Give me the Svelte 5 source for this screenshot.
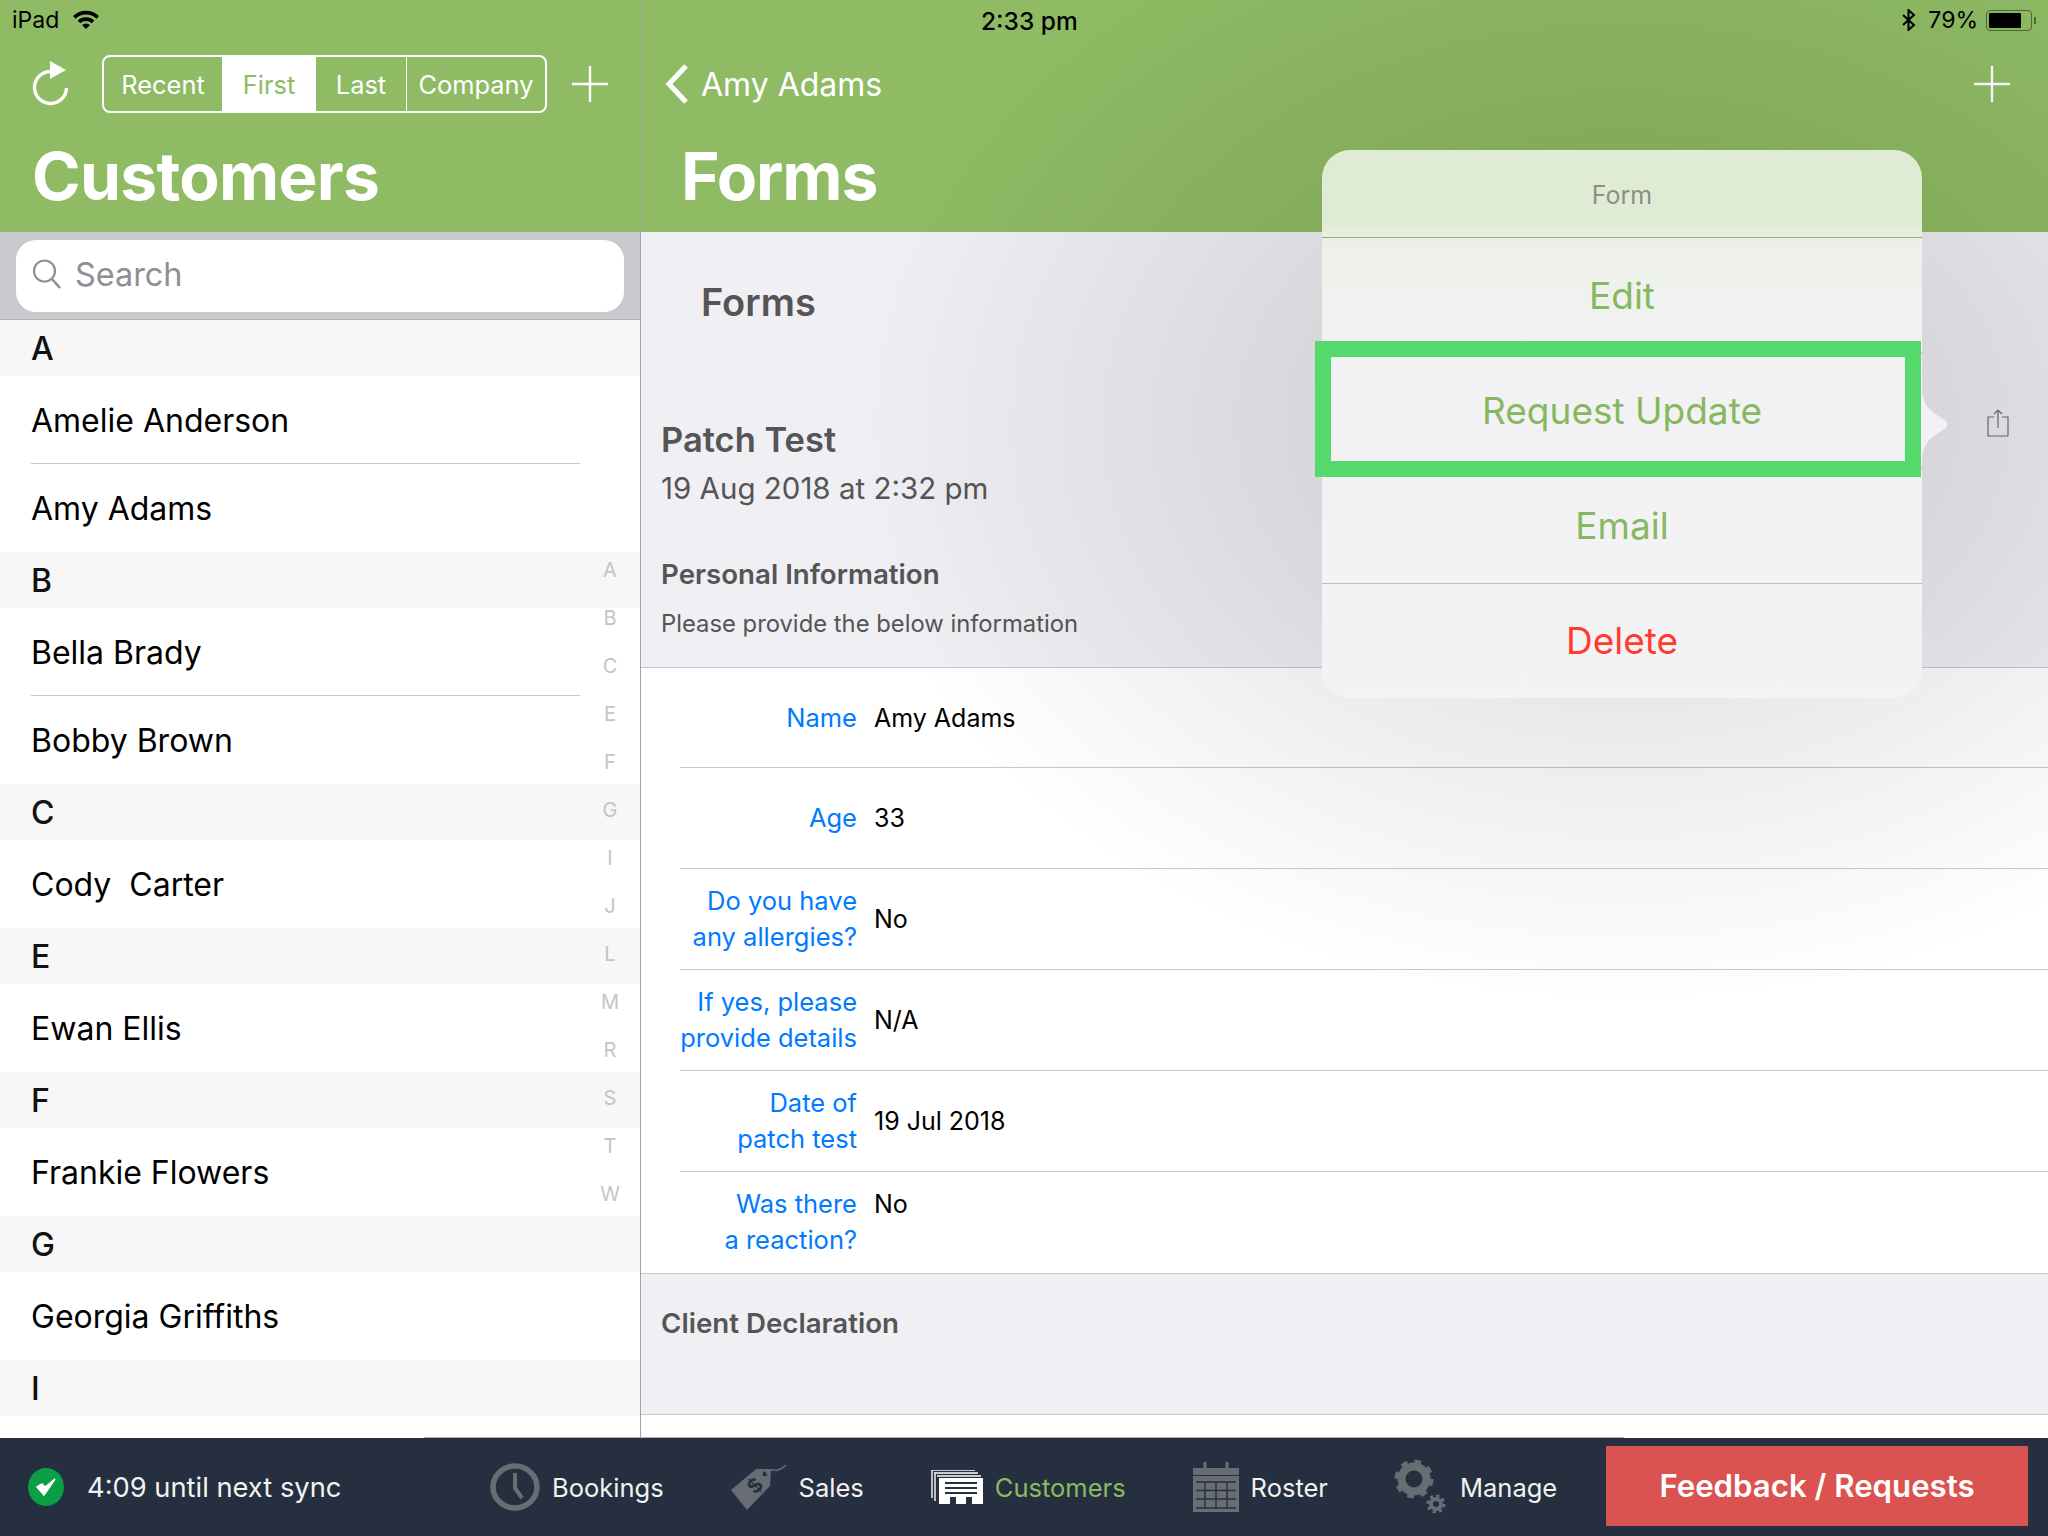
<script lang="ts">
    const sections = [
        { letter: 'A', people: ['Amelie Anderson', 'Amy Adams'] },
        { letter: 'B', people: ['Bella Brady', 'Bobby Brown'] },
        { letter: 'C', people: ['Cody  Carter'] },
        { letter: 'E', people: ['Ewan Ellis'] },
        { letter: 'F', people: ['Frankie Flowers'] },
        { letter: 'G', people: ['Georgia Griffiths'] },
        { letter: 'I', people: [''] }
    ];
    const indexLetters = ['A', 'B', 'C', 'E', 'F', 'G', 'I', 'J', 'L', 'M', 'R', 'S', 'T', 'W'];
    const segments = ['Recent', 'First', 'Last', 'Company'];
    const fields = [
        { label: ['Name'], value: 'Amy Adams' },
        { label: ['Age'], value: '33' },
        { label: ['Do you have', 'any allergies?'], value: 'No' },
        { label: ['If yes, please', 'provide details'], value: 'N/A' },
        { label: ['Date of', 'patch test'], value: '19 Jul 2018' },
        { label: ['Was there', 'a reaction?'], value: 'No', top: true }
    ];
</script>

<div class="screen">
    <div class="panes">
        <aside class="left">
            <header class="head">
                <div class="status">
                    <span>iPad</span>
                    <svg class="wifi" viewBox="0 0 28 20" width="28" height="20">
                        <path d="M1 7 A19 19 0 0 1 27 7 L24.4 9.8 A15 15 0 0 0 3.6 9.8 Z" fill="#000" />
                        <path d="M5.6 11.6 A12.4 12.4 0 0 1 22.4 11.6 L19.8 14.3 A8.6 8.6 0 0 0 8.2 14.3 Z" fill="#000" />
                        <path d="M10 16 A6 6 0 0 1 18 16 L14 20 Z" fill="#000" />
                    </svg>
                </div>
                <div class="tools">
                    <svg class="refresh" viewBox="0 0 38 46" width="38" height="46">
                        <path d="M18 10.5 A16 16 0 1 0 34.5 27" fill="none" stroke="#fff" stroke-width="3.4" />
                        <path d="M18 0 L34 9 L18 18 Z" fill="#fff" />
                    </svg>
                    <div class="segmented">
                        {#each segments as seg}
                            <div class="seg" class:active={seg === 'First'}>{seg}</div>
                        {/each}
                    </div>
                    <svg class="plus" viewBox="0 0 36 36" width="36" height="36">
                        <path d="M18 0 V36 M0 18 H36" stroke="#fff" stroke-width="2.4" />
                    </svg>
                </div>
                <h1>Customers</h1>
            </header>
            <div class="searchbar">
                <div class="searchbox">
                    <svg viewBox="0 0 30 32" width="30" height="32">
                        <circle cx="12.5" cy="13" r="10.5" fill="none" stroke="#8e8e93" stroke-width="2.2" />
                        <path d="M20 21 L28 30" stroke="#8e8e93" stroke-width="2.6" />
                    </svg>
                    <span>Search</span>
                </div>
            </div>
            <div class="list">
                {#each sections as section}
                    <div class="letter">{section.letter}</div>
                    {#each section.people as person, i}
                        <div class="person" class:ruled={i < section.people.length - 1}>{person}</div>
                    {/each}
                {/each}
                <div class="index">
                    {#each indexLetters as l}
                        <span>{l}</span>
                    {/each}
                </div>
            </div>
        </aside>

        <main class="right">
            <header class="head">
                <div class="status right-status">
                    <span class="time">2:33 pm</span>
                    <div class="status-end">
                        <svg viewBox="0 0 14 22" width="14" height="22">
                            <path d="M1 6 L12 16 L6.5 21 V1 L12 6 L1 16" fill="none" stroke="#000" stroke-width="2" />
                        </svg>
                        <span>79%</span>
                        <div class="battery"><div class="charge"></div></div>
                        <div class="battery-tip"></div>
                    </div>
                </div>
                <div class="tools nav">
                    <svg viewBox="0 0 24 40" width="24" height="40">
                        <path d="M21 2 L4 20 L21 38" fill="none" stroke="#fff" stroke-width="5" />
                    </svg>
                    <span class="back">Amy Adams</span>
                    <svg class="plus" viewBox="0 0 36 36" width="36" height="36">
                        <path d="M18 0 V36 M0 18 H36" stroke="#fff" stroke-width="2.4" />
                    </svg>
                </div>
                <h1>Forms</h1>
            </header>

            <div class="intro">
                <h2>Forms</h2>
                <div class="intro-row">
                    <div>
                        <h3>Patch Test</h3>
                        <p class="date">19 Aug 2018 at 2:32 pm</p>
                    </div>
                    <svg class="share" viewBox="0 0 22 28" width="22" height="28">
                        <path d="M7 8 H1 V27 H21 V8 H15" fill="none" stroke="#6d6d72" stroke-width="1.2" />
                        <path d="M11 19 V1 M7 5 L11 1 L15 5" fill="none" stroke="#6d6d72" stroke-width="1.2" />
                    </svg>
                </div>
                <h4>Personal Information</h4>
                <p class="hint">Please provide the below information</p>
            </div>

            <div class="fields">
                {#each fields as field}
                    <div class="field" class:top={field.top}>
                        <div class="label">
                            {#each field.label as line}
                                <div>{line}</div>
                            {/each}
                        </div>
                        <div class="value">{field.value}</div>
                    </div>
                {/each}
            </div>

            <div class="declaration">
                <h4>Client Declaration</h4>
            </div>
            <div class="blank"></div>
        </main>
    </div>

    <footer class="bar">
        <div class="sync">
            <svg viewBox="0 0 36 38" width="36" height="38">
                <ellipse cx="18" cy="19" rx="18" ry="19" fill="#0a9f45" />
                <path d="M9 19 L16 27 L27 11 L17 19 L14 16 Z" fill="#fff" stroke="#fff" stroke-width="1.5" />
            </svg>
            <span>4:09 until next sync</span>
        </div>
        <div class="tab bookings">
            <svg viewBox="0 0 50 48" width="50" height="48">
                <ellipse cx="25" cy="24" rx="22" ry="21" fill="none" stroke="#686d74" stroke-width="5.5" />
                <path d="M25 10 V25 L32 35" fill="none" stroke="#686d74" stroke-width="4" />
            </svg>
            <span>Bookings</span>
        </div>
        <div class="tab sales">
            <svg viewBox="0 0 58 46" width="58" height="46">
                <path d="M1 26 L26 5 L41 5 L40 22 L17 46 Z" fill="#686d74" />
                <circle cx="35" cy="10" r="2.4" fill="#252f3f" />
                <path d="M36 10 C40 2 44 8 48 6 C52 5 54 3 56 1" fill="none" stroke="#686d74" stroke-width="1.6" />
                <text x="21" y="33" font-size="20" font-weight="700" fill="#252f3f" transform="rotate(-45 21 27)">$</text>
            </svg>
            <span>Sales</span>
        </div>
        <div class="tab customers">
            <svg viewBox="0 0 52 34" width="52" height="34">
                <path d="M0 0 H44 M1 1 V28 M3 3 H47 M4 3 V31 M6 6 H50" fill="none" stroke="#fff" stroke-width="1.4" />
                <path d="M8 8 H52 V34 H41 V27 H35 V34 H25 V27 H19 V34 H8 Z" fill="#fff" />
                <path d="M14 13 H46 M14 18 H46 M14 23 H46" stroke="#252f3f" stroke-width="2" />
            </svg>
            <span>Customers</span>
        </div>
        <div class="tab roster">
            <svg viewBox="0 0 46 50" width="46" height="50">
                <path d="M12 0 V10 M34 0 V10" stroke="#686d74" stroke-width="3" />
                <path d="M0 6 H46 V50 H0 Z" fill="#686d74" />
                <path d="M0 13.5 H46" stroke="#252f3f" stroke-width="1" />
                <path d="M12 20 V46 M23 20 V46 M34 20 V46 M3 20 H43 M3 28.5 H43 M3 37 H43 M3 46 H43" stroke="#252f3f" stroke-width="1.4" />
            </svg>
            <span>Roster</span>
        </div>
        <div class="tab manage">
            <svg viewBox="0 0 54 56" width="54" height="56">
                <circle cx="20" cy="20" r="12.5" fill="none" stroke="#686d74" stroke-width="8" />
                <circle cx="20" cy="20" r="17" fill="none" stroke="#686d74" stroke-width="5" stroke-dasharray="6.5 6.85" />
                <circle cx="42" cy="45" r="5" fill="none" stroke="#686d74" stroke-width="4" />
                <circle cx="42" cy="45" r="8" fill="none" stroke="#686d74" stroke-width="3" stroke-dasharray="3.2 3.08" />
            </svg>
            <span>Manage</span>
        </div>
        <div class="feedback">Feedback / Requests</div>
    </footer>

    <div class="dim"></div>

    <div class="popover">
        <div class="pop-title">Form</div>
        <div class="pop-item">Edit</div>
        <div class="pop-item">Request Update</div>
        <div class="pop-item">Email</div>
        <div class="pop-item danger">Delete</div>
        <div class="arrow"></div>
        <div class="highlight"></div>
    </div>
</div>

<style>
    :global(body) {
        margin: 0;
        font-family: Inter, "Noto Sans", sans-serif;
    }
    .screen {
        position: relative;
        width: 2048px;
        height: 1536px;
        overflow: hidden;
        display: flex;
        flex-direction: column;
        background: #fff;
    }
    .panes {
        height: 1438px;
        display: flex;
    }
    .left {
        width: 640px;
        border-right: 1px solid #a3a3a8;
        display: flex;
        flex-direction: column;
        flex-shrink: 0;
    }
    .right {
        flex: 1;
        display: flex;
        flex-direction: column;
        background: #efeff4;
    }
    .head {
        height: 232px;
        flex-shrink: 0;
        background: #8fbb64;
        box-sizing: border-box;
        position: relative;
    }
    .status {
        height: 40px;
        padding-left: 12px;
        display: flex;
        align-items: center;
        gap: 13px;
        font-size: 23px;
        color: #000;
    }
    .wifi {
        margin-top: -2px;
    }
    .right-status {
        padding: 0 12px 0 0;
        position: relative;
        justify-content: flex-end;
    }
    .time {
        position: absolute;
        left: 340px;
        top: 6px;
        font-size: 24.5px;
        font-weight: 500;
    }
    .status-end {
        display: flex;
        align-items: center;
        gap: 0;
    }
    .status-end span {
        margin: 0 8px 0 12px;
    }
    .battery {
        width: 46px;
        height: 21px;
        box-sizing: border-box;
        border: 1.5px solid #4d6a38;
        border-radius: 4px;
        padding: 2px;
    }
    .charge {
        width: 79%;
        height: 100%;
        background: #000;
        border-radius: 1px;
    }
    .battery-tip {
        width: 2px;
        height: 7px;
        margin-left: 2px;
        background: #4d6a38;
    }
    .tools {
        height: 72px;
        padding: 16px 32px 0 32px;
        display: flex;
        align-items: center;
        box-sizing: border-box;
    }
    .refresh {
        flex-shrink: 0;
        margin-top: -1px;
    }
    .segmented {
        margin-left: 32px;
        width: 447px;
        height: 58px;
        box-sizing: border-box;
        border: 2px solid #fff;
        border-radius: 8px;
        display: grid;
        grid-template-columns: 118px 94px 91px 1fr;
        overflow: hidden;
    }
    .seg {
        display: flex;
        align-items: center;
        justify-content: center;
        color: #fff;
        font-size: 25.4px;
    }
    .seg:nth-child(3) {
        border-right: 1.5px solid #fff;
    }
    .seg.active {
        background: #fff;
        color: #8fbb64;
    }
    .tools .plus {
        margin-left: 25px;
        flex-shrink: 0;
    }
    h1 {
        margin: 24px 0 0 32px;
        font-size: 66px;
        line-height: 80px;
        font-weight: 700;
        color: #fff;
        letter-spacing: -0.8px;
    }
    .nav {
        padding: 16px 38px 0 24px;
    }
    .back {
        margin-left: 12px;
        flex: 1;
        color: #fff;
        font-size: 32px;
    }
    .right .head h1 {
        margin-left: 40px;
        letter-spacing: -1.1px;
    }
    .searchbar {
        height: 88px;
        box-sizing: border-box;
        flex-shrink: 0;
        background: #c9c9ce;
        border-bottom: 1px solid #b2b2b7;
        padding: 8px 16px 7px;
    }
    .searchbox {
        height: 72px;
        box-sizing: border-box;
        background: #fff;
        border-radius: 20px;
        display: flex;
        align-items: center;
        padding: 0 0 4px 16px;
        gap: 13px;
        color: #8e8e93;
        font-size: 32.4px;
    }
    .list {
        position: relative;
        flex: 1;
        overflow: hidden;
    }
    .letter {
        height: 56px;
        padding: 1px 0 0 31px;
        box-sizing: border-box;
        background: #f7f7f7;
        display: flex;
        align-items: center;
        font-size: 32px;
        font-weight: 500;
        color: #111;
    }
    .person {
        height: 88px;
        padding-left: 31px;
        display: flex;
        align-items: center;
        font-size: 32px;
        color: #000;
        white-space: pre;
        position: relative;
    }
    .person.ruled::after {
        content: '';
        position: absolute;
        left: 31px;
        right: 60px;
        bottom: 0;
        height: 1px;
        background: #c8c7cc;
    }
    .index {
        position: absolute;
        top: 226px;
        right: 18px;
        width: 24px;
        display: flex;
        flex-direction: column;
        align-items: center;
        font-size: 20px;
        line-height: 48px;
        color: #c4c4c6;
    }
    .intro {
        height: 436px;
        flex-shrink: 0;
        box-sizing: border-box;
        border-bottom: 1px solid #c8c7cc;
        padding: 0 20px;
        color: #555;
    }
    h2 {
        margin: 44px 0 0 40px;
        font-size: 38px;
        line-height: 52px;
        font-weight: 600;
    }
    .intro-row {
        display: flex;
        justify-content: space-between;
        align-items: flex-start;
        margin-top: 90px;
    }
    h3 {
        margin: 0;
        font-size: 34.5px;
        line-height: 44px;
        font-weight: 600;
    }
    .date {
        margin: 4px 0 0;
        font-size: 29.5px;
        line-height: 44px;
    }
    .share {
        margin: -9px 19px 0 0;
    }
    h4 {
        margin: 44px 0 0;
        font-size: 27.7px;
        line-height: 40px;
        font-weight: 600;
        color: #555;
    }
    .hint {
        margin: 12px 0 0;
        font-size: 23.8px;
        line-height: 36px;
    }
    .fields {
        background: #fff;
        flex-shrink: 0;
        padding-left: 39px;
        border-bottom: 1px solid #c8c7cc;
    }
    .field {
        height: 101px;
        box-sizing: border-box;
        border-bottom: 1px solid #c8c7cc;
        display: flex;
        align-items: center;
        line-height: 36px;
    }
    .field:first-child {
        height: 100px;
    }
    .field:last-child {
        border-bottom: 0;
    }
    .label {
        width: 179px;
        margin-left: -2px;
        flex-shrink: 0;
        text-align: right;
        color: #007aff;
        font-size: 25.5px;
        white-space: nowrap;
    }
    .value {
        margin-left: 17px;
        color: #000;
        font-size: 25px;
    }
    .field.top {
        align-items: flex-start;
        padding-top: 14px;
    }
    .declaration {
        height: 141px;
        flex-shrink: 0;
        box-sizing: border-box;
        padding: 29px 20px 0;
        border-bottom: 1px solid #c8c7cc;
    }
    .declaration h4 {
        margin: 0;
    }
    .blank {
        flex: 1;
        background: #fff;
    }
    .bar {
        flex: 1;
        background: #252f3f;
        position: relative;
        display: flex;
        align-items: center;
        font-size: 25.5px;
        color: #f2f2f2;
    }
    .bar::before {
        content: '';
        position: absolute;
        top: -1px;
        left: 424px;
        width: 1200px;
        height: 1px;
        background: #b2b2b2;
    }
    .sync {
        width: 490px;
        flex-shrink: 0;
        box-sizing: border-box;
        padding-left: 28px;
        display: flex;
        align-items: center;
        gap: 23px;
        font-size: 27.3px;
    }
    .tab {
        display: flex;
        align-items: center;
        gap: 12px;
        flex-shrink: 0;
    }
    .sales {
        margin-left: 66px;
        gap: 11px;
    }
    .customers {
        margin-left: 67px;
        color: #8cba5f;
    }
    .roster {
        margin-left: 67px;
    }
    .manage {
        margin-left: 66px;
    }
    .feedback {
        margin: 0 20px 2px auto;
        width: 422px;
        height: 80px;
        background: #da5350;
        color: #fff;
        display: flex;
        align-items: center;
        justify-content: center;
        font-size: 31.2px;
        font-weight: 600;
    }
    .dim {
        position: absolute;
        left: 641px;
        top: 0;
        right: 0;
        height: 1438px;
        pointer-events: none;
        background: radial-gradient(ellipse 780px 580px at 981px 424px, rgba(0, 0, 0, 0.11) 35%, rgba(0, 0, 0, 0.06) 65%, rgba(0, 0, 0, 0) 100%);
    }
    .popover {
        position: absolute;
        left: 1322px;
        top: 150px;
        width: 600px;
        height: 548px;
        border-radius: 28px;
        background: linear-gradient(#dfebd2 0, #e0ebd4 72px, #e8eee0 84px, #edf0ea 92px, #f0f2ef 150px, #f2f2f5 230px, #f3f3f6 100%);
        display: flex;
        flex-direction: column;
    }
    .pop-title {
        height: 88px;
        flex-shrink: 0;
        box-sizing: border-box;
        padding-top: 2px;
        border-bottom: 1px solid #98a88c;
        display: flex;
        align-items: center;
        justify-content: center;
        font-size: 25px;
        color: #8a8f88;
    }
    .pop-item {
        flex: 1;
        display: flex;
        align-items: center;
        justify-content: center;
        font-size: 37px;
        color: #86b85f;
        border-bottom: 1px solid #bdbdc1;
    }
    .pop-item.danger {
        color: #ff3b30;
        border-bottom: 0;
    }
    .arrow {
        position: absolute;
        left: 600px;
        top: 240px;
        width: 27px;
        height: 69px;
        background: #f2f2f5;
        clip-path: path('M0 0 C1 14 6 18 12 23 L24 31 Q27 34.5 24 38 L12 46 C6 51 1 55 0 69 Z');
    }
    .highlight {
        position: absolute;
        left: -7px;
        top: 191px;
        width: 606px;
        height: 136px;
        box-sizing: border-box;
        border: 16px solid #55d96c;
    }
</style>
